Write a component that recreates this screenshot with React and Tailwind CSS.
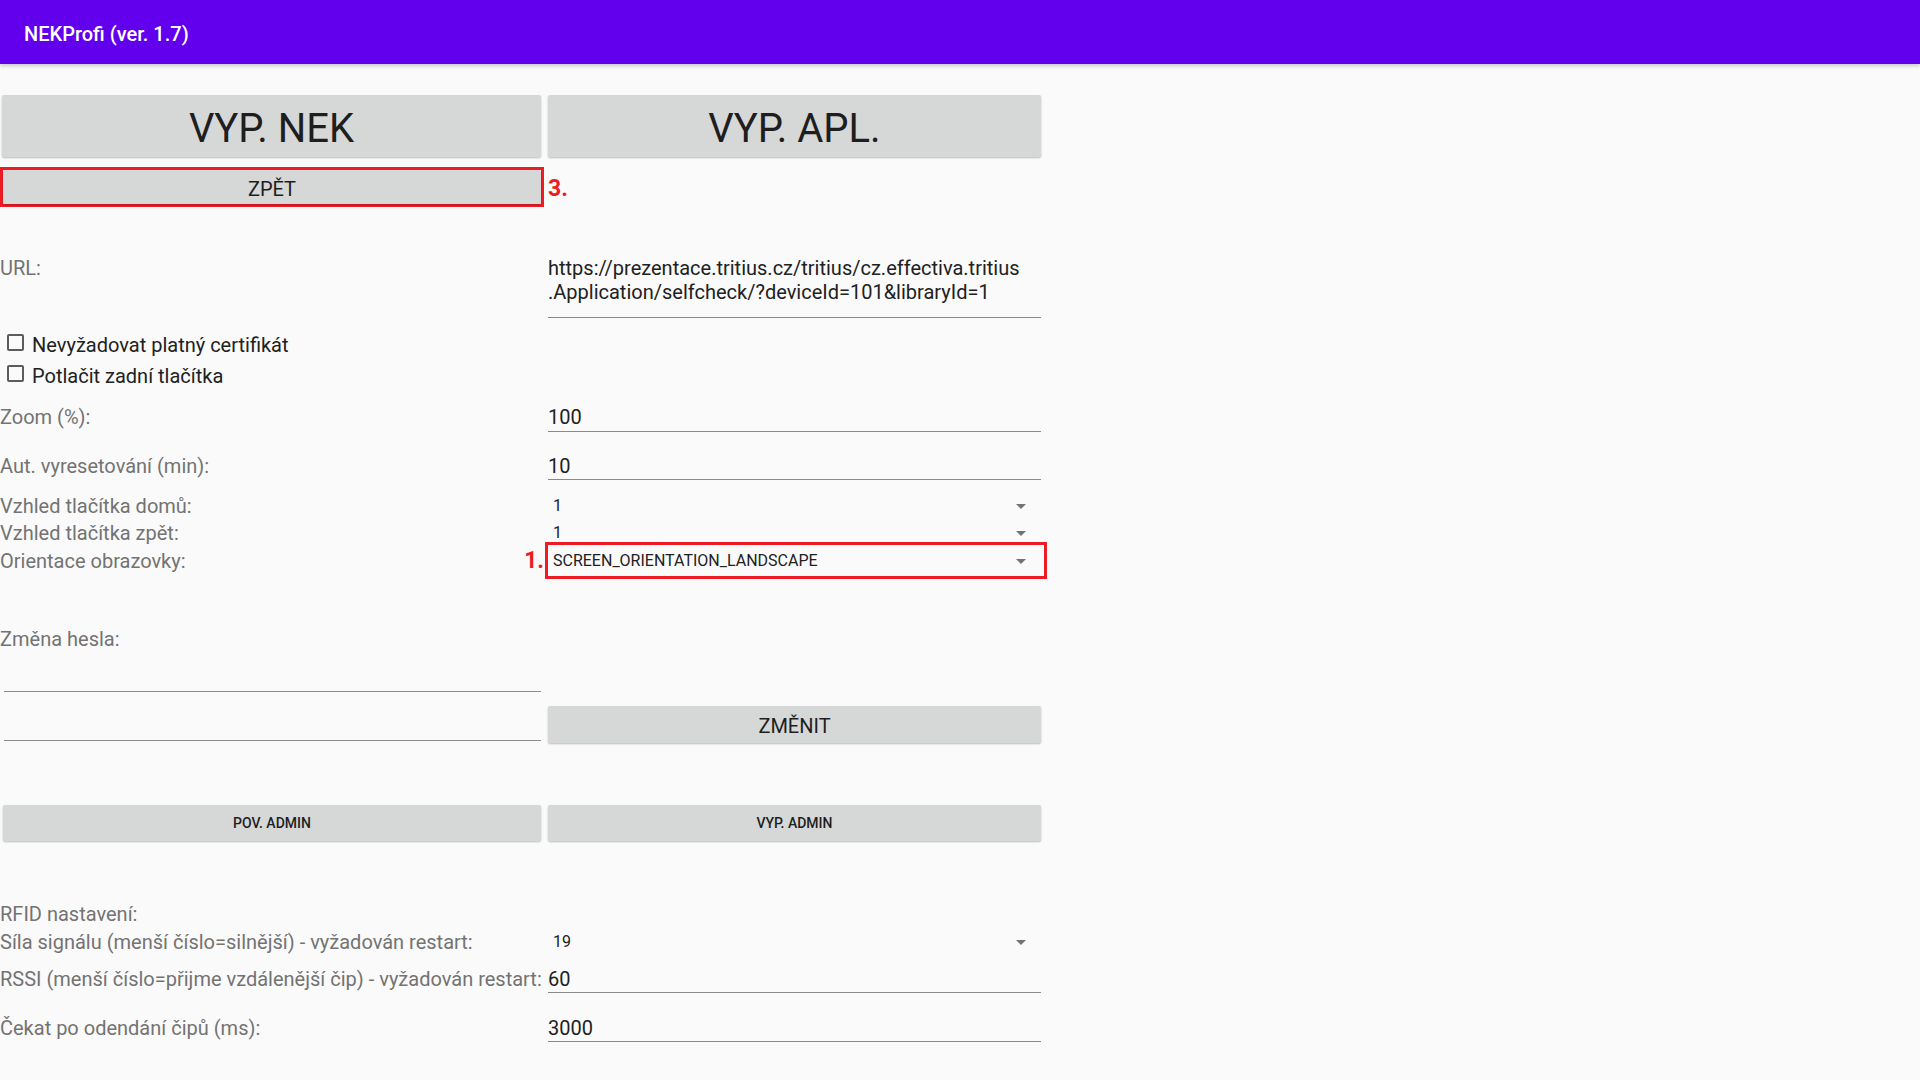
import React from 'react'

const label = 'text-[20px] leading-[24px] text-[#737373] whitespace-nowrap'
const value = 'text-[20px] leading-[24px] text-[#212121] whitespace-nowrap'

function Row({ className = '', children }) {
  return <div className={`grid grid-cols-[548px_493px] ${className}`}>{children}</div>
}

function Btn({ className = '', children }) {
  return (
    <div
      className={`flex items-center justify-center bg-[#d6d7d7] rounded-[2px] shadow-[0_1px_2px_rgba(0,0,0,0.25)] text-[#1e1e1e] leading-none ${className}`}
    >
      {children}
    </div>
  )
}

function Caret() {
  return (
    <svg width="10" height="5" viewBox="0 0 10 5" className="shrink-0">
      <path d="M0 0h10L5 5z" fill="#737373" />
    </svg>
  )
}

function Spinner({ text }) {
  return (
    <div className="flex items-center justify-between h-[24px] pl-[5px] pr-[15px]">
      <span className="text-[16px] text-[#212121]">{text}</span>
      <Caret />
    </div>
  )
}

function Field({ text, className = 'pb-[1px]' }) {
  return <div className={`${value} border-b border-[#8a8a8a] ${className}`}>{text}</div>
}

function Check({ text, className = '' }) {
  return (
    <div className={`flex items-start ${className}`}>
      <div className="ml-[7px] mt-[1px] w-[17px] h-[17px] border-2 border-[#5c5c5c] rounded-[2px]" />
      <span className="ml-[8px] text-[20px] leading-[24px] text-[#212121]">{text}</span>
    </div>
  )
}

export default function App() {
  return (
    <div className="min-h-screen bg-[#fafafa] font-[Roboto,sans-serif]">
      <div className="h-[64px] bg-[#6200ee] pl-[24px] pt-[22px] shadow-[0_2px_4px_rgba(0,0,0,0.2)]">
        <div className="text-[20px] leading-[24px] font-medium text-white">NEKProfi (ver. 1.7)</div>
      </div>

      <div className="pt-[31px]">
        <Row className="h-[62px]">
          <Btn className="ml-[2px] w-[539px] h-[62px] pt-[6px] text-[40px]">VYP. NEK</Btn>
          <Btn className="w-[493px] h-[62px] pt-[6px] text-[40px]">VYP. APL.</Btn>
        </Row>

        <Row className="mt-[10px] h-[40px]">
          <div className="w-[544px] h-[40px] border-[3px] border-[#ed1c24]">
            <Btn className="w-[538px] h-[34px] pt-[4px] text-[20px]">ZPĚT</Btn>
          </div>
          <div className="flex items-center pt-[2px] text-[23px] leading-none font-bold text-[#ed1c24]">3.</div>
        </Row>

        <Row className="mt-[49px]">
          <div className={label}>URL:</div>
          <Field
            className="pb-[13px]"
            text={
              <>
                <div>https://prezentace.tritius.cz/tritius/cz.effectiva.tritius</div>
                <div>.Application/selfcheck/?deviceId=101&amp;libraryId=1</div>
              </>
            }
          />
        </Row>

        <Check className="mt-[15px]" text="Nevyžadovat platný certifikát" />
        <Check className="mt-[7px]" text="Potlačit zadní tlačítka" />

        <Row className="mt-[17px]">
          <div className={label}>Zoom (%):</div>
          <Field className="pb-[2px]" text="100" />
        </Row>

        <Row className="mt-[22px]">
          <div className={label}>Aut. vyresetování (min):</div>
          <Field text="10" />
        </Row>

        <Row className="mt-[14px]">
          <div className={label}>Vzhled tlačítka domů:</div>
          <Spinner text="1" />
        </Row>

        <Row className="mt-[3px]">
          <div className={label}>Vzhled tlačítka zpět:</div>
          <Spinner text="1" />
        </Row>

        <Row className="mt-[4px] items-start">
          <div className="flex items-center justify-between pr-[4px]">
            <span className={label}>Orientace obrazovky:</span>
            <span className="text-[23px] leading-[24px] font-bold text-[#ed1c24]">1.</span>
          </div>
          <div className="-mt-[7px] -ml-[3px] w-[502px] h-[37px] border-[3px] border-[#ed1c24] pt-[4px]">
            <div className="flex items-center justify-between h-[24px] pl-[5px] pr-[18px]">
              <span className="text-[16px] text-[#212121]">SCREEN_ORIENTATION_LANDSCAPE</span>
              <Caret />
            </div>
          </div>
        </Row>

        <div className={`mt-[48px] ${label}`}>Změna hesla:</div>

        <Row>
          <div className="ml-[4px] w-[537px] h-[41px] border-b border-[#8a8a8a]" />
        </Row>

        <Row className="items-start">
          <div className="ml-[4px] w-[537px] h-[49px] border-b border-[#8a8a8a]" />
          <Btn className="mt-[14px] w-[493px] h-[37px] pt-[2px] text-[20px]">ZMĚNIT</Btn>
        </Row>

        <Row className="mt-[62px] h-[36px]">
          <Btn className="ml-[3px] w-[538px] h-[36px] text-[14px] font-medium">POV. ADMIN</Btn>
          <Btn className="w-[493px] h-[36px] text-[14px] font-medium">VYP. ADMIN</Btn>
        </Row>

        <div className={`mt-[61px] ${label}`}>RFID nastavení:</div>

        <Row className="mt-[4px]">
          <div className={label}>Síla signálu (menší číslo=silnější) - vyžadován restart:</div>
          <Spinner text="19" />
        </Row>

        <Row className="mt-[13px]">
          <div className={label}>RSSI (menší číslo=přijme vzdálenější čip) - vyžadován restart:</div>
          <Field text="60" />
        </Row>

        <Row className="mt-[23px]">
          <div className={label}>Čekat po odendání čipů (ms):</div>
          <Field text="3000" />
        </Row>
      </div>
    </div>
  )
}
